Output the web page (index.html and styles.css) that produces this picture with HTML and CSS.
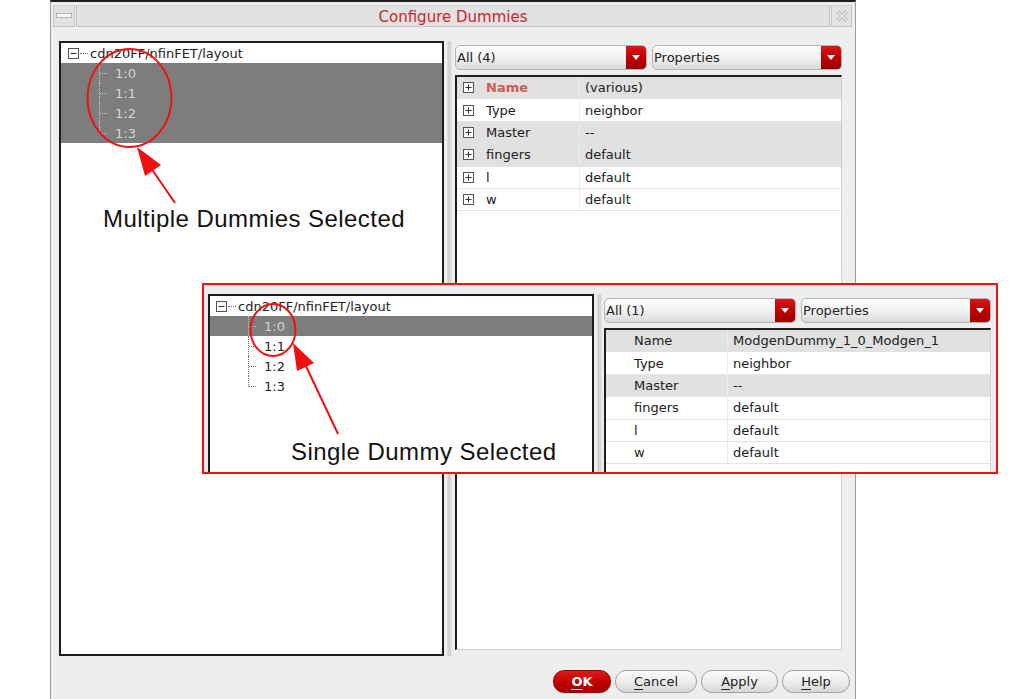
FILE: index.html
```html
<!DOCTYPE html>
<html>
<head>
<meta charset="utf-8">
<title>Configure Dummies</title>
<link rel="stylesheet" href="styles.css">
</head>
<body>
<div class="page">
  <div class="window">
    <div class="titlebar">
      <div class="tb-btn tb-min">
        <svg width="16" height="6" viewBox="0 0 16 6"><rect x="0.5" y="0.5" width="15" height="4" fill="#f6f6f6" stroke="#b5b5b5"/></svg>
      </div>
      <div class="tb-title">Configure Dummies</div>
      <div class="tb-btn tb-close">
        <svg width="12" height="12" viewBox="0 0 12 12"><path d="M1.5 1.5 L10.5 10.5 M10.5 1.5 L1.5 10.5" stroke="#b9b9b9" stroke-width="3.2" fill="none"/><path d="M1.5 1.5 L10.5 10.5 M10.5 1.5 L1.5 10.5" stroke="#ececec" stroke-width="1.4" fill="none"/></svg>
      </div>
    </div>

    <div class="content">
      <div class="tree">
        <div class="tree-root">
          <svg class="box-icon" width="11" height="11" viewBox="0 0 11 11"><rect x="0.5" y="0.5" width="10" height="10" fill="#fff" stroke="#555"/><path d="M2.5 5.5 H8.5" stroke="#333"/></svg>
          <span class="root-link"></span>
          <span class="root-text">cdn20FF/nfinFET/layout</span>
        </div>
        <div class="tree-children">
          <div class="tree-child selected"><span class="branch"></span><span class="leaf">1:0</span></div>
          <div class="tree-child selected"><span class="branch"></span><span class="leaf">1:1</span></div>
          <div class="tree-child selected"><span class="branch"></span><span class="leaf">1:2</span></div>
          <div class="tree-child selected last"><span class="branch"></span><span class="leaf">1:3</span></div>
        </div>
      </div>
      <div class="splitter"></div>
      <div class="panel">
        <div class="combos">
          <div class="combo combo-a"><span class="combo-text">All (4)</span><span class="combo-arrow"><span class="tri"></span></span></div>
          <div class="combo combo-b"><span class="combo-text">Properties</span><span class="combo-arrow"><span class="tri"></span></span></div>
        </div>
        <div class="prop-table">
          <div class="prop-row shade"><div class="prop-key"><svg class="box-icon" width="11" height="11" viewBox="0 0 11 11"><rect x="0.5" y="0.5" width="10" height="10" fill="#fff" stroke="#555"/><path d="M2.5 5.5 H8.5 M5.5 2.5 V8.5" stroke="#333"/></svg><span class="key-name key-red">Name</span></div><div class="prop-val">(various)</div></div>
          <div class="prop-row"><div class="prop-key"><svg class="box-icon" width="11" height="11" viewBox="0 0 11 11"><rect x="0.5" y="0.5" width="10" height="10" fill="#fff" stroke="#555"/><path d="M2.5 5.5 H8.5 M5.5 2.5 V8.5" stroke="#333"/></svg><span class="key-name">Type</span></div><div class="prop-val">neighbor</div></div>
          <div class="prop-row shade"><div class="prop-key"><svg class="box-icon" width="11" height="11" viewBox="0 0 11 11"><rect x="0.5" y="0.5" width="10" height="10" fill="#fff" stroke="#555"/><path d="M2.5 5.5 H8.5 M5.5 2.5 V8.5" stroke="#333"/></svg><span class="key-name">Master</span></div><div class="prop-val">--</div></div>
          <div class="prop-row shade"><div class="prop-key"><svg class="box-icon" width="11" height="11" viewBox="0 0 11 11"><rect x="0.5" y="0.5" width="10" height="10" fill="#fff" stroke="#555"/><path d="M2.5 5.5 H8.5 M5.5 2.5 V8.5" stroke="#333"/></svg><span class="key-name">fingers</span></div><div class="prop-val">default</div></div>
          <div class="prop-row"><div class="prop-key"><svg class="box-icon" width="11" height="11" viewBox="0 0 11 11"><rect x="0.5" y="0.5" width="10" height="10" fill="#fff" stroke="#555"/><path d="M2.5 5.5 H8.5 M5.5 2.5 V8.5" stroke="#333"/></svg><span class="key-name">l</span></div><div class="prop-val">default</div></div>
          <div class="prop-row"><div class="prop-key"><svg class="box-icon" width="11" height="11" viewBox="0 0 11 11"><rect x="0.5" y="0.5" width="10" height="10" fill="#fff" stroke="#555"/><path d="M2.5 5.5 H8.5 M5.5 2.5 V8.5" stroke="#333"/></svg><span class="key-name">w</span></div><div class="prop-val">default</div></div>
        </div>
      </div>
    </div>

    <div class="buttons">
      <button class="btn btn-ok"><u>O</u>K</button>
      <button class="btn btn-cancel"><u>C</u>ancel</button>
      <button class="btn btn-apply"><u>A</u>pply</button>
      <button class="btn btn-help"><u>H</u>elp</button>
    </div>
  </div>

  <div class="inset">
    <div class="tree inset-tree">
      <div class="tree-root">
        <svg class="box-icon" width="11" height="11" viewBox="0 0 11 11"><rect x="0.5" y="0.5" width="10" height="10" fill="#fff" stroke="#555"/><path d="M2.5 5.5 H8.5" stroke="#333"/></svg>
        <span class="root-link"></span>
        <span class="root-text">cdn20FF/nfinFET/layout</span>
      </div>
      <div class="tree-children">
        <div class="tree-child selected"><span class="branch"></span><span class="leaf">1:0</span></div>
        <div class="tree-child"><span class="branch"></span><span class="leaf">1:1</span></div>
        <div class="tree-child"><span class="branch"></span><span class="leaf">1:2</span></div>
        <div class="tree-child last"><span class="branch"></span><span class="leaf">1:3</span></div>
      </div>
    </div>
    <div class="splitter inset-splitter"></div>
    <div class="panel inset-panel">
      <div class="combos">
        <div class="combo combo-a"><span class="combo-text">All (1)</span><span class="combo-arrow"><span class="tri"></span></span></div>
        <div class="combo combo-b"><span class="combo-text">Properties</span><span class="combo-arrow"><span class="tri"></span></span></div>
      </div>
      <div class="prop-table inset-table">
        <div class="prop-row shade"><div class="prop-key"><span class="key-name">Name</span></div><div class="prop-val">ModgenDummy_1_0_Modgen_1</div></div>
        <div class="prop-row"><div class="prop-key"><span class="key-name">Type</span></div><div class="prop-val">neighbor</div></div>
        <div class="prop-row shade"><div class="prop-key"><span class="key-name">Master</span></div><div class="prop-val">--</div></div>
        <div class="prop-row"><div class="prop-key"><span class="key-name">fingers</span></div><div class="prop-val">default</div></div>
        <div class="prop-row"><div class="prop-key"><span class="key-name">l</span></div><div class="prop-val">default</div></div>
        <div class="prop-row"><div class="prop-key"><span class="key-name">w</span></div><div class="prop-val">default</div></div>
      </div>
    </div>
  </div>

  <svg class="annotations" width="1013" height="699" viewBox="0 0 1013 699">
    <ellipse cx="129.5" cy="98" rx="42" ry="49" fill="none" stroke="#f01010" stroke-width="2"/>
    <line x1="175" y1="203" x2="151" y2="168" stroke="#f01010" stroke-width="2"/>
    <polygon points="137,147 145,176 161,165" fill="#f01010"/>
    <ellipse cx="273" cy="330" rx="22.5" ry="26" fill="none" stroke="#f01010" stroke-width="2"/>
    <line x1="338" y1="434" x2="305" y2="364" stroke="#f01010" stroke-width="2"/>
    <polygon points="293,343 297,371 314,363" fill="#f01010"/>
  </svg>
  <div class="callout callout-multi">Multiple Dummies Selected</div>
  <div class="callout callout-single">Single Dummy Selected</div>
</div>
</body>
</html>
```

FILE: styles.css
```css
* { box-sizing: border-box; }

html, body {
  margin: 0;
  padding: 0;
  background: #ffffff;
}

body {
  font-family: "DejaVu Sans", "Liberation Sans", sans-serif;
  font-size: 13px;
  color: #202020;
}

.page {
  position: relative;
  width: 1013px;
  height: 699px;
  overflow: hidden;
  background: #ffffff;
}

/* ---------- window frame ---------- */
.window {
  margin-left: 50px;
  width: 806px;
  height: 699px;
  border-top: 2px solid #1e1e1e;
  border-left: 1px solid #9c9c9c;
  border-right: 1px solid #9c9c9c;
  background: #eeeeee;
  padding: 3px 3px 0 2px;
  display: flex;
  flex-direction: column;
}

.titlebar {
  display: flex;
  gap: 1px;
  height: 22px;
  flex: none;
}

.tb-btn {
  display: flex;
  align-items: center;
  justify-content: center;
  background: #e2e2e2;
  border: 1px solid #c4c4c4;
  border-top-color: #d8d8d8;
}

.tb-min { width: 22px; }
.tb-close { width: 21px; }

.tb-title {
  flex: 1;
  display: flex;
  align-items: center;
  justify-content: center;
  background: #e2e2e2;
  border: 1px solid #c4c4c4;
  border-top-color: #d8d8d8;
  color: #cc2630;
  font-size: 15px;
  padding-top: 1px;
}

/* ---------- main content ---------- */
.content {
  display: flex;
  align-items: flex-start;
  margin-top: 14px;
  padding-left: 6px;
  flex: none;
}

.tree {
  width: 385px;
  height: 615px;
  border: 2px solid #1c1c1c;
  background: #ffffff;
  flex: none;
}

.tree-root {
  display: flex;
  align-items: center;
  height: 20px;
  padding-left: 7px;
  color: #222;
}

.box-icon { flex: none; display: block; }

.root-link {
  width: 8px;
  height: 1px;
  margin-left: 1px;
  margin-right: 2px;
  border-top: 1px dotted #666;
}

.tree-child {
  display: flex;
  align-items: center;
  height: 20px;
  padding-left: 38px;
  color: #222;
}

.tree-child.selected {
  background: #7d7d7d;
  color: #d4d4d4;
}

.branch {
  align-self: stretch;
  width: 9px;
  border-left: 1px dotted #707070;
  background-image: linear-gradient(to right, #707070 50%, transparent 50%);
  background-size: 2px 1px;
  background-repeat: repeat-x;
  background-position: 0 50%;
}

.tree-child.selected .branch {
  border-left-color: #c4c4c4;
  background-image: linear-gradient(to right, #c4c4c4 50%, transparent 50%);
}

.tree-child.last .branch {
  align-self: flex-start;
  height: 11px;
  background-position: 0 100%;
}

.leaf { margin-left: 7px; }

.splitter {
  width: 11px;
  align-self: stretch;
  flex: none;
  background: linear-gradient(to right, #eeeeee 0, #eeeeee 3px, #cfcfcf 4px, #d8d8d8 7px, #eeeeee 8px, #eeeeee 100%);
}

.panel {
  width: 387px;
  flex: none;
  padding-top: 4px;
  display: flex;
  flex-direction: column;
}

.combos {
  display: flex;
  gap: 5px;
  height: 25px;
}

.combo {
  display: flex;
  align-items: stretch;
  border: 1px solid #b4b4b4;
  border-radius: 5px;
  background: linear-gradient(to bottom, #fdfdfd 0%, #f0f0f0 55%, #d9d9d9 100%);
  overflow: hidden;
}

.combo-a { width: 192px; flex: none; }
.combo-b { flex: 1; }

.combo-text {
  flex: 1;
  display: flex;
  align-items: center;
  padding-left: 1px;
  color: #222;
}

.combo-arrow {
  width: 20px;
  display: flex;
  align-items: center;
  justify-content: center;
  background: linear-gradient(to bottom, #d81818 0%, #c00000 50%, #9c0000 100%);
}

.tri {
  width: 0;
  height: 0;
  border-left: 4px solid transparent;
  border-right: 4px solid transparent;
  border-top: 5px solid #ffffff;
}

.prop-table {
  margin-top: 5px;
  height: 575px;
  border-top: 2px solid #1e1e1e;
  border-left: 2px solid #1e1e1e;
  border-right: 1px solid #d0d0d0;
  border-bottom: 1px solid #d0d0d0;
  background: #ffffff;
}

.prop-row {
  display: grid;
  grid-template-columns: 123px 1fr;
  height: 22.4px;
  border-bottom: 1px solid #e4e4e4;
}

.prop-row.shade {
  background: #e1e1e1;
  border-bottom-color: #e1e1e1;
}

.prop-key {
  display: flex;
  align-items: center;
  padding-left: 6px;
  border-right: 1px solid #ededed;
}

.key-name { margin-left: 12px; }

.key-red {
  color: #cf5a58;
  font-weight: bold;
}

.prop-val {
  display: flex;
  align-items: center;
  padding-left: 5px;
}

/* ---------- dialog buttons ---------- */
.buttons {
  display: flex;
  justify-content: flex-end;
  gap: 4px;
  margin-top: 14px;
  padding-right: 2px;
}

.btn {
  height: 23px;
  border: 1px solid #a2a2a2;
  border-radius: 11px;
  background: linear-gradient(to bottom, #fbfbfb 0%, #eeeeee 50%, #d6d6d6 100%);
  font-family: "DejaVu Sans", sans-serif;
  font-size: 13px;
  color: #222;
  padding: 0;
}

.btn u { text-underline-offset: 3px; }

.btn-ok {
  width: 58px;
  background: linear-gradient(to bottom, #dc1c1c 0%, #c40000 50%, #a00000 100%);
  border-color: #9a0000;
  color: #ffffff;
  font-weight: bold;
}

.btn-cancel { width: 82px; }
.btn-apply { width: 77px; }
.btn-help { width: 68px; }

/* ---------- inset (overlay screenshot) ---------- */
.inset {
  position: absolute;
  left: 202px;
  top: 283px;
  width: 796px;
  height: 191px;
  border: 2px solid #ee1111;
  background: #eeeeee;
  display: flex;
  align-items: flex-start;
  padding: 9px 0 0 4px;
  overflow: hidden;
}

.inset-tree {
  width: 386px;
  height: 300px;
}

.inset-tree .tree-root { padding-left: 6px; }

.inset-splitter {
  width: 10px;
}

.inset-table .prop-key {
  padding-left: 28px;
}

.inset-table .prop-row {
  grid-template-columns: 122px 1fr;
}

.inset-table .key-name { margin-left: 0; }

/* ---------- annotations ---------- */
.annotations {
  position: absolute;
  left: 0;
  top: 0;
  pointer-events: none;
}

.callout {
  position: absolute;
  font-family: "Liberation Sans", Arial, sans-serif;
  font-size: 24px;
  line-height: 24px;
  letter-spacing: 0.45px;
  color: #111111;
  white-space: nowrap;
}

.callout-multi { left: 103px; top: 207px; }
.callout-single { left: 291px; top: 440px; }
```
